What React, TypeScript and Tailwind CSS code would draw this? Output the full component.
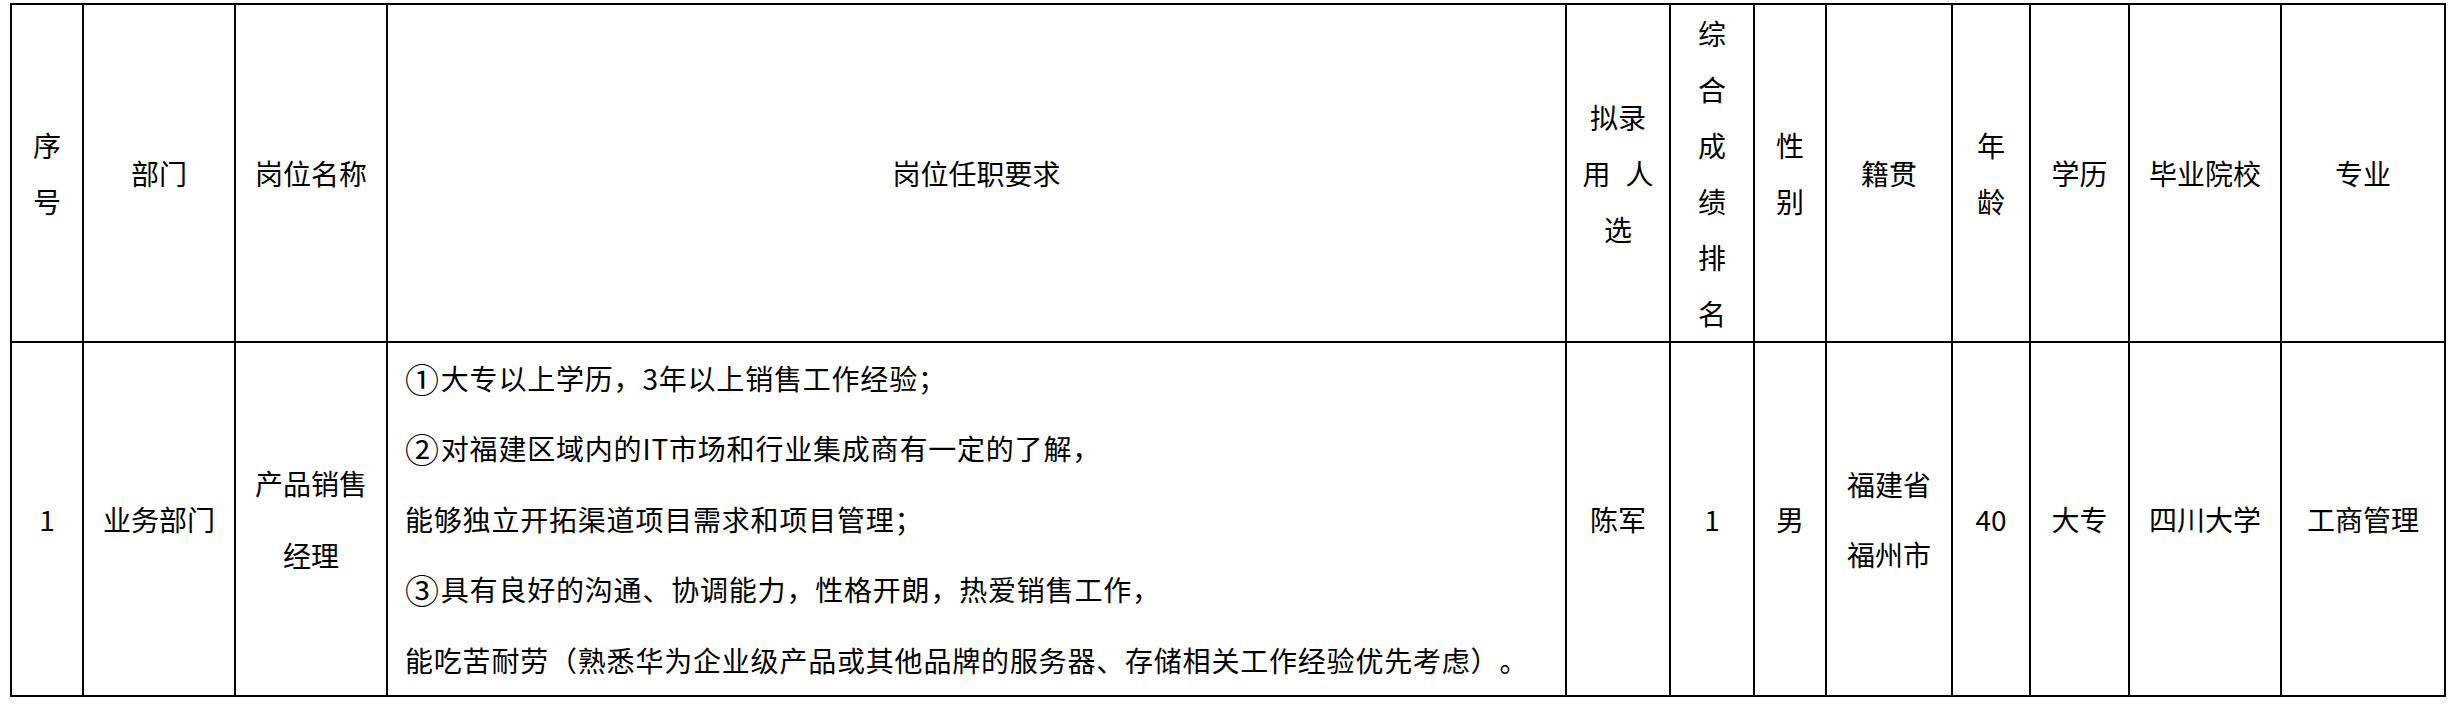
import React from 'react';

const font = { fontFamily: '"Noto Sans CJK SC", "Noto Sans", sans-serif' };

const cell = 'border-r-2 border-b-2 border-black flex items-center justify-center text-center';

const Circled: React.FC<{ n: string }> = ({ n }) => (
  <span className="inline-block text-[34px] leading-none align-[-3px] mr-[1px]">{n}</span>
);

const requirements: React.ReactNode[] = [
  <>
    <Circled n="①" />
    大专以上学历，3年以上销售工作经验；
  </>,
  <>
    <Circled n="②" />
    对福建区域内的IT市场和行业集成商有一定的了解，
  </>,
  '能够独立开拓渠道项目需求和项目管理；',
  <>
    <Circled n="③" />
    具有良好的沟通、协调能力，性格开朗，热爱销售工作，
  </>,
  '能吃苦耐劳（熟悉华为企业级产品或其他品牌的服务器、存储相关工作经验优先考虑）。',
];

const Lines: React.FC<{ lines: React.ReactNode[]; leading: string }> = ({ lines, leading }) => (
  <div className={leading}>
    {lines.map((l, i) => (
      <div key={i}>{l}</div>
    ))}
  </div>
);

const App: React.FC = () => {
  return (
    <div className="min-h-screen bg-white pt-[3px] pl-[10px] text-black [text-spacing-trim:space-all]" style={font}>
      <div className="inline-grid grid-cols-[72px_152px_152px_1179px_104px_84px_72px_126px_78px_99px_152px_164px] grid-rows-[338px_354px] border-l-2 border-t-2 border-black text-[28px]">
        {/* header row */}
        <div className={cell}>
          <Lines lines={['序', '号']} leading="leading-[56px]" />
        </div>
        <div className={cell}>部门</div>
        <div className={cell}>岗位名称</div>
        <div className={cell}>岗位任职要求</div>
        <div className={cell}>
          <Lines
            lines={[
              '拟录',
              <span key="a">
                用<span className="ml-[15px]">人</span>
              </span>,
              '选',
            ]}
            leading="leading-[56px]"
          />
        </div>
        <div className={cell}>
          <Lines lines={['综', '合', '成', '绩', '排', '名']} leading="leading-[56px]" />
        </div>
        <div className={cell}>
          <Lines lines={['性', '别']} leading="leading-[56px]" />
        </div>
        <div className={cell}>籍贯</div>
        <div className={cell}>
          <Lines lines={['年', '龄']} leading="leading-[56px]" />
        </div>
        <div className={cell}>学历</div>
        <div className={cell}>毕业院校</div>
        <div className={cell}>专业</div>

        {/* data row */}
        <div className={cell}>1</div>
        <div className={cell}>业务部门</div>
        <div className={cell}>
          <Lines lines={['产品销售', '经理']} leading="leading-[72px]" />
        </div>
        <div className="border-r-2 border-b-2 border-black flex items-center pl-[17px] tracking-[0.8px] leading-[70.5px] whitespace-nowrap">
          <div>
            {requirements.map((r, i) => (
              <div key={i} className="h-[70.5px]">{r}</div>
            ))}
          </div>
        </div>
        <div className={cell}>陈军</div>
        <div className={cell}>1</div>
        <div className={cell}>男</div>
        <div className={cell}>
          <Lines lines={['福建省', '福州市']} leading="leading-[70px]" />
        </div>
        <div className={cell}>40</div>
        <div className={cell}>大专</div>
        <div className={cell}>四川大学</div>
        <div className={cell}>工商管理</div>
      </div>
    </div>
  );
};

export default App;
